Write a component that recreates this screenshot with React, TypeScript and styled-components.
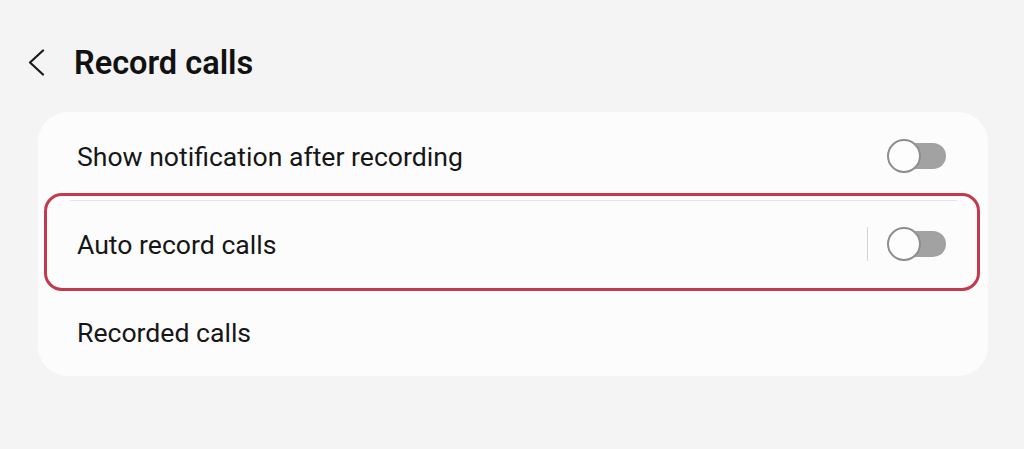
import React from "react";
import styled, { createGlobalStyle } from "styled-components";

const Global = createGlobalStyle`
  html, body { margin: 0; padding: 0; background: #f4f4f4; }
  body { font-family: Roboto, "Noto Sans", "Liberation Sans", sans-serif; color: #111; }
`;

const Page = styled.div`
  width: 1024px;
  height: 449px;
  background: #f4f4f4;
  overflow: hidden;
`;

const Header = styled.header`
  display: flex;
  align-items: center;
  height: 112px;
  padding: 13px 0 0 26px;
  box-sizing: border-box;
`;

const BackButton = styled.button`
  border: 0;
  background: none;
  padding: 0;
  width: 20px;
  height: 28px;
  display: flex;
  align-items: center;
  justify-content: center;
  margin-right: 28px;
`;

const Title = styled.h1`
  margin: 0;
  font-size: 32.5px;
  font-weight: 600;
  color: #111;
`;

const Card = styled.section`
  position: relative;
  margin-left: 38px;
  width: 950px;
  background: #fcfcfc;
  border-radius: 30px;
  display: flex;
  flex-direction: column;
`;

const Row = styled.div<{ $divider?: boolean }>`
  position: relative;
  height: 88px;
  display: flex;
  align-items: center;
  padding: 0 42px 0 39px;
  box-sizing: border-box;
  ${(p) =>
    p.$divider
      ? `&::before { content: ""; position: absolute; top: 0; left: 32px; right: 31px; height: 1px; background: #e4e4e4; }`
      : ""}
`;

const Label = styled.span`
  flex: 1;
  font-size: 26.6px;
  color: #161616;
`;

const VDivider = styled.span`
  width: 1px;
  height: 34px;
  background: #d4d4d4;
  margin-right: 19px;
`;

const Switch = styled.span`
  position: relative;
  width: 59px;
  height: 34px;
  display: inline-block;
  &::before {
    content: "";
    position: absolute;
    left: 10px;
    right: 0;
    top: 4px;
    bottom: 4px;
    background: #a2a2a2;
    border-radius: 13px;
  }
  &::after {
    content: "";
    position: absolute;
    left: 0;
    top: 0;
    width: 34px;
    height: 34px;
    box-sizing: border-box;
    border-radius: 50%;
    background: #fdfdfd;
    border: 2px solid #8e8e8e;
  }
`;

const Highlight = styled.div`
  position: absolute;
  left: 6px;
  top: 81px;
  width: 936px;
  height: 98px;
  box-sizing: border-box;
  border: 3px solid #c23a4b;
  border-radius: 18px;
  pointer-events: none;
`;

export default function App() {
  return (
    <Page>
      <Global />
      <Header>
        <BackButton aria-label="Back">
          <svg width="18" height="27" viewBox="0 0 18 27" fill="none">
            <path d="M16 1.5 L3 13.5 L16 25.5" stroke="#1a1a1a" strokeWidth="2.2" strokeLinecap="round" strokeLinejoin="round" />
          </svg>
        </BackButton>
        <Title>Record calls</Title>
      </Header>
      <Card>
        <Row>
          <Label>Show notification after recording</Label>
          <Switch />
        </Row>
        <Row $divider>
          <Label>Auto record calls</Label>
          <VDivider />
          <Switch />
        </Row>
        <Row>
          <Label>Recorded calls</Label>
        </Row>
        <Highlight />
      </Card>
    </Page>
  );
}
